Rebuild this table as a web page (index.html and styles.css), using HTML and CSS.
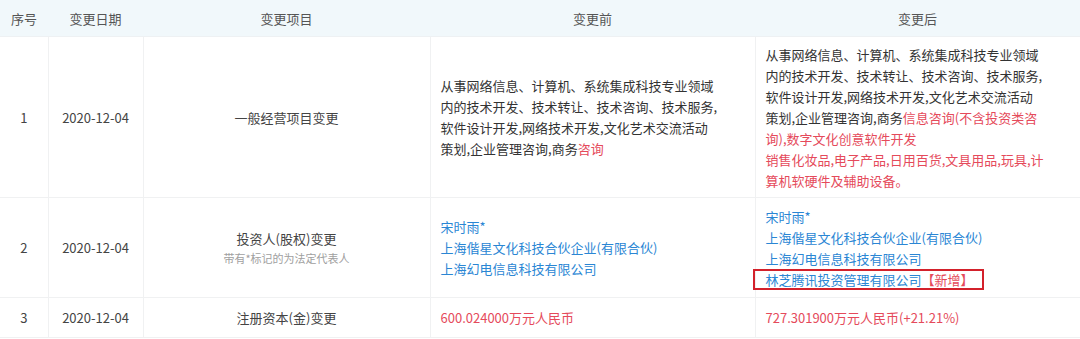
FILE: index.html
```html
<!DOCTYPE html>
<html lang="zh-CN">
<head>
<meta charset="utf-8">
<link rel="stylesheet" href="styles.css">
</head>
<body>
<table class="tbl">
  <colgroup>
    <col class="c-no"><col class="c-date"><col class="c-item"><col class="c-before"><col class="c-after">
  </colgroup>
  <thead>
    <tr class="head">
      <th>序号</th><th>变更日期</th><th>变更项目</th><th>变更前</th><th>变更后</th>
    </tr>
  </thead>
  <tbody>
    <tr class="r1">
      <td class="ctr">1</td>
      <td class="ctr">2020-12-04</td>
      <td class="ctr">一般经营项目变更</td>
      <td class="txt">从事网络信息、计算机、系统集成科技专业领域<br>内的技术开发、技术转让、技术咨询、技术服务,<br>软件设计开发,网络技术开发,文化艺术交流活动<br>策划,企业管理咨询,商务<span class="red">咨询</span></td>
      <td class="txt">从事网络信息、计算机、系统集成科技专业领域<br>内的技术开发、技术转让、技术咨询、技术服务,<br>软件设计开发,网络技术开发,文化艺术交流活动<br>策划,企业管理咨询,商务<span class="red">信息咨询(不含投资类咨<br>询),数字文化创意软件开发<br>销售化妆品,电子产品,日用百货,文具用品,玩具,计<br>算机软硬件及辅助设备。</span></td>
    </tr>
    <tr class="r2">
      <td class="ctr">2</td>
      <td class="ctr">2020-12-04</td>
      <td class="ctr"><div class="item">投资人(股权)变更</div><div class="note">带有*标记的为法定代表人</div></td>
      <td class="txt blue">宋时雨*<br>上海偕星文化科技合伙企业(有限合伙)<br>上海幻电信息科技有限公司</td>
      <td class="txt blue">宋时雨*<br>上海偕星文化科技合伙企业(有限合伙)<br>上海幻电信息科技有限公司<br><span class="mark">林芝腾讯投资管理有限公司<span class="red">【新增】</span></span></td>
    </tr>
    <tr class="r3">
      <td class="ctr">3</td>
      <td class="ctr">2020-12-04</td>
      <td class="ctr">注册资本(金)变更</td>
      <td class="txt red">600.024000万元人民币</td>
      <td class="txt red">727.301900万元人民币(+21.21%)</td>
    </tr>
  </tbody>
</table>
</body>
</html>
```
FILE: styles.css
```css
html, body {
  margin: 0;
  padding: 0;
  background: #ffffff;
}
body {
  font-family: "Noto Sans CJK SC", "Noto Sans", sans-serif;
  font-size: 13px;
  color: #333333;
}
.tbl {
  width: 1080px;
  border-collapse: collapse;
  table-layout: fixed;
}
.c-no { width: 48px; }
.c-date { width: 95px; }
.c-item { width: 287px; }
.c-before { width: 325px; }
.c-after { width: 325px; }

.head th {
  height: 36px;
  padding: 0;
  background: #f1f8fb;
  color: #555555;
  font-weight: normal;
  font-size: 13px;
  text-align: center;
  vertical-align: middle;
  border-bottom: 1px solid #eef1f3;
}
td {
  padding: 0 10px;
  border: 1px solid #f0f1f2;
  vertical-align: middle;
  line-height: 21px;
}
tr td:first-child { border-left: none; }
tr td:last-child { border-right: none; }
.r1 { height: 161px; }
.r2 { height: 100px; }
.r3 { height: 40px; }
.ctr {
  text-align: center;
  padding: 0 4px;
  color: #444444;
}
.txt { text-align: left; }
.red { color: #e54a5b; }
.blue { color: #2a86d4; }
.item { line-height: 21px; }
.note {
  font-size: 11px;
  line-height: 18px;
  color: #a0a0a0;
}
.mark {
  display: inline-block;
  margin-left: -13px;
  padding: 0 8px 0 11px;
  line-height: 17px;
  border: 2px solid #d3212b;
}
```
